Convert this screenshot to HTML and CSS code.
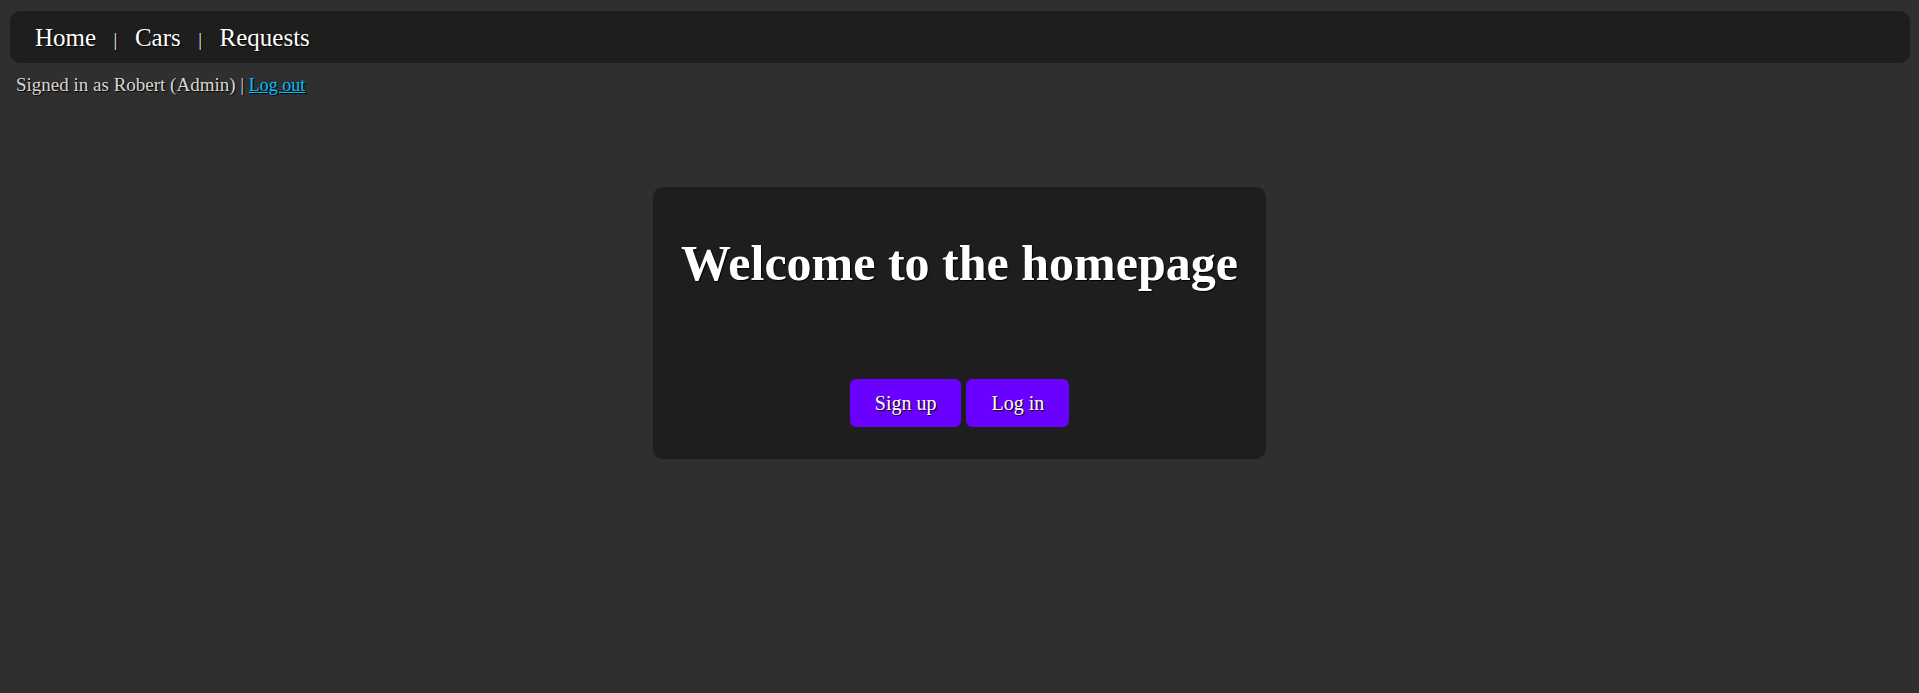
FILE: index.html
```html
<!DOCTYPE html>
<html lang="en">
<head>
<meta charset="utf-8">
<title>Home</title>
<link rel="stylesheet" href="styles.css">
</head>
<body>
<nav class="navbar">
  <a class="nav-link" href="#">Home</a>
  <span class="nav-sep">|</span>
  <a class="nav-link" href="#">Cars</a>
  <span class="nav-sep">|</span>
  <a class="nav-link" href="#">Requests</a>
</nav>
<div class="user-line">Signed in as Robert (Admin) | <a class="logout" href="#">Log out</a></div>
<main class="main">
  <section class="card">
    <h1 class="title">Welcome to the homepage</h1>
    <div class="actions">
      <button class="btn" type="button">Sign up</button>
      <button class="btn" type="button">Log in</button>
    </div>
  </section>
</main>
</body>
</html>
```

FILE: styles.css
```css
html, body {
  margin: 0;
  padding: 0;
}

body {
  background: #2f2f2f;
  color: #ffffff;
  font-family: "Liberation Serif", "Times New Roman", serif;
  text-shadow: 1px 1px 1px #000;
  min-height: 693px;
}

.navbar {
  margin: 11px 9px 0 10px;
  height: 52px;
  border-radius: 10px;
  background: #1e1e1e;
  display: flex;
  align-items: baseline;
  padding: 1px 0 0 25px;
  gap: 17.5px;
  box-sizing: border-box;
}

.nav-link {
  font-size: 25px;
  line-height: 52px;
  color: #ffffff;
  text-decoration: none;
}

.nav-sep {
  font-size: 19px;
  color: #e8e8e8;
}

.user-line {
  margin-top: 11px;
  padding-left: 16px;
  font-size: 19px;
  color: #d6d6d6;
}

.logout {
  font-size: 18px;
  color: #00bfff;
  text-decoration: underline;
}

.main {
  display: flex;
  justify-content: center;
  padding-top: 91px;
}

.card {
  background: #1e1e1e;
  border-radius: 10px;
  padding: 48px 28px 32px;
  text-align: center;
  box-sizing: border-box;
  height: 272px;
}

.title {
  margin: 0;
  font-size: 50px;
  line-height: 57px;
  font-weight: bold;
  color: #ffffff;
  white-space: nowrap;
}

.actions {
  margin-top: 87px;
  display: flex;
  justify-content: center;
  gap: 5px;
}

.btn {
  font-family: "Liberation Serif", "Times New Roman", serif;
  font-size: 20px;
  line-height: 24px;
  padding: 12px 25px;
  border: none;
  border-radius: 6px;
  background: #6a00ff;
  color: #ffffff;
  text-shadow: 1px 1px 1px #000;
  cursor: pointer;
}
```
